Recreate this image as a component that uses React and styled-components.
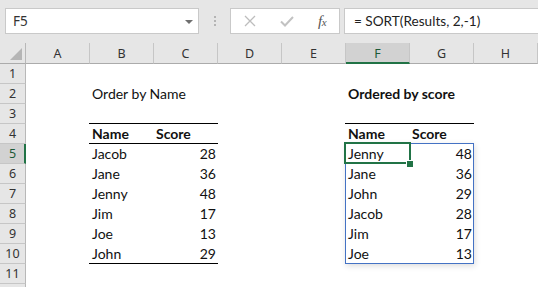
import React from "react";
import styled, { createGlobalStyle, css } from "styled-components";

const GlobalStyle = createGlobalStyle`
  html, body { margin: 0; padding: 0; background: #fff; overflow: hidden; }
  #root { width: 538px; height: 287px; overflow: hidden; }
`;

const CELL_FONT = `Lato, "Open Sans", sans-serif`;
const UI_FONT = `"Noto Sans", "Open Sans", sans-serif`;
const GREEN = "#217346";

const Window = styled.div`
  width: 538px;
  height: 287px;
  overflow: hidden;
  display: flex;
  flex-direction: column;
  background: #fff;
`;

const Toolbar = styled.div`
  flex: none;
  height: 43px;
  box-sizing: border-box;
  padding-top: 8px;
  background: #e6e6e6;
  display: flex;
  align-items: flex-start;
`;

const Box = styled.div`
  height: 26px;
  box-sizing: border-box;
  border: 1px solid #c9c9c9;
  background: #fff;
  display: flex;
  align-items: center;
`;

const NameBox = styled(Box)`
  margin-left: 5px;
  width: 194px;
  justify-content: space-between;
  padding: 0 5px 0 7px;
  font-family: ${UI_FONT};
  font-size: 13.5px;
  color: #333;
`;

const DropArrow = styled.span`
  width: 0;
  height: 0;
  border-left: 4px solid transparent;
  border-right: 4px solid transparent;
  border-top: 4px solid #6f6f6f;
  margin-top: 1px;
`;

const Grip = styled.div`
  width: 31px;
  height: 26px;
  display: flex;
  flex-direction: column;
  align-items: center;
  justify-content: center;
  gap: 2px;
  span {
    width: 2px;
    height: 2px;
    background: #b4b4b4;
  }
`;

const ButtonBox = styled(Box)`
  width: 110px;
`;

const IconSlot = styled.div`
  width: ${(p) => p.$w}px;
  height: 24px;
  display: flex;
  align-items: center;
  justify-content: center;
`;

const Fx = styled.span`
  font-family: "Liberation Serif", "DejaVu Serif", serif;
  font-style: italic;
  font-size: 15px;
  color: #555;
  letter-spacing: -0.5px;
  small {
    font-size: 11px;
  }
`;

const FormulaBox = styled(Box)`
  margin-left: 4px;
  flex: 1;
  margin-right: -10px;
  padding-left: 9px;
  font-family: ${CELL_FONT};
  font-size: 13.6px;
  color: #222;
`;

const Sheet = styled.div`
  position: relative;
  flex: 1;
`;

const COLS = `26px repeat(8, 64px) 1fr`;

const HeaderRow = styled.div`
  display: grid;
  grid-template-columns: ${COLS};
  height: 21px;
  background: #e6e6e6;
`;

const Corner = styled.div`
  position: relative;
  box-sizing: border-box;
  border-right: 1px solid #b8b8b8;
  border-bottom: 1px solid #ababab;
  &::after {
    content: "";
    position: absolute;
    right: 3px;
    bottom: 3px;
    width: 0;
    height: 0;
    border-left: 12px solid transparent;
    border-bottom: 12px solid #b5b5b5;
  }
`;

const ColHead = styled.div`
  box-sizing: border-box;
  border-right: 1px solid #c6c6c6;
  border-bottom: 1px solid #ababab;
  display: flex;
  align-items: center;
  justify-content: center;
  font-family: ${UI_FONT};
  font-size: 12.5px;
  color: #333;
  ${(p) =>
    p.$active &&
    css`
      background: #d2d2d2;
      border-bottom: 2px solid ${GREEN};
      color: #1d5a38;
      padding-top: 1px;
    `}
`;

const Row = styled.div`
  display: grid;
  grid-template-columns: ${COLS};
  height: 20px;
`;

const RowHead = styled.div`
  box-sizing: border-box;
  background: #e6e6e6;
  border-right: 1px solid #b8b8b8;
  border-bottom: 1px solid #c6c6c6;
  display: flex;
  align-items: center;
  justify-content: center;
  font-family: ${UI_FONT};
  font-size: 12.5px;
  color: #333;
  ${(p) =>
    p.$active &&
    css`
      background: #d2d2d2;
      border-right: 2px solid ${GREEN};
      color: #1d5a38;
      padding-left: 1px;
    `}
`;

const Cell = styled.div`
  position: relative;
  box-sizing: border-box;
  height: 20px;
  padding: 0 2px 0 2px;
  font-family: ${CELL_FONT};
  font-size: 14px;
  line-height: 20px;
  color: #111;
  white-space: nowrap;
  overflow: visible;
  text-align: ${(p) => (p.$right ? "right" : "left")};
  font-weight: ${(p) => (p.$bold ? 700 : 400)};
  ${(p) =>
    p.$line &&
    css`
      &::after {
        content: "";
        position: absolute;
        left: -1px;
        right: 0;
        bottom: 0;
        height: 1px;
        background: #000;
      }
    `}
`;

const Range = styled.div`
  position: absolute;
  left: 345px;
  top: 100px;
  width: 129px;
  height: 121px;
  box-sizing: border-box;
  border: 1px solid #4472c4;
  box-shadow: 1px 2px 6px rgba(0, 0, 0, 0.14);
  pointer-events: none;
`;

const Active = styled.div`
  position: absolute;
  left: 344px;
  top: 99px;
  width: 67px;
  height: 22px;
  box-sizing: border-box;
  border: 2px solid ${GREEN};
  pointer-events: none;
`;

const Handle = styled.div`
  position: absolute;
  left: 407px;
  top: 118px;
  width: 6px;
  height: 6px;
  box-sizing: border-box;
  background: ${GREEN};
  outline: 1px solid #fff;
`;

const COL_LETTERS = ["A", "B", "C", "D", "E", "F", "G", "H"];

const ROWS = [
  { n: 1 },
  { n: 2, cells: { B: { t: "Order by Name" }, F: { t: "Ordered by score", bold: true } } },
  { n: 3, lines: ["B", "C", "F", "G"] },
  {
    n: 4,
    lines: ["B", "C"],
    cells: {
      B: { t: "Name", bold: true },
      C: { t: "Score", bold: true },
      F: { t: "Name", bold: true },
      G: { t: "Score", bold: true },
    },
  },
  { n: 5, data: ["Jacob", 28, "Jenny", 48] },
  { n: 6, data: ["Jane", 36, "Jane", 36] },
  { n: 7, data: ["Jenny", 48, "John", 29] },
  { n: 8, data: ["Jim", 17, "Jacob", 28] },
  { n: 9, data: ["Joe", 13, "Jim", 17] },
  { n: 10, data: ["John", 29, "Joe", 13], lines: ["B", "C"] },
  { n: 11 },
  { n: 12, hidden: true },
];

function cellsFor(row) {
  if (row.data) {
    const [a, b, c, d] = row.data;
    return {
      B: { t: a },
      C: { t: String(b), right: true },
      F: { t: c },
      G: { t: String(d), right: true },
    };
  }
  return row.cells || {};
}

const CloseIcon = () => (
  <svg width="12" height="12" viewBox="0 0 12 12">
    <path d="M1 1 L11 11 M11 1 L1 11" stroke="#bdbdbd" strokeWidth="1.3" fill="none" />
  </svg>
);

const CheckIcon = () => (
  <svg width="14" height="11" viewBox="0 0 14 11">
    <path d="M1 5.5 L5 9.5 L13 1" stroke="#c2c2c2" strokeWidth="2" fill="none" />
  </svg>
);

export default function App() {
  return (
    <Window>
      <GlobalStyle />
      <Toolbar>
        <NameBox>
          <span>F5</span>
          <DropArrow />
        </NameBox>
        <Grip>
          <span />
          <span />
          <span />
        </Grip>
        <ButtonBox>
          <IconSlot $w={38}>
            <CloseIcon />
          </IconSlot>
          <IconSlot $w={36}>
            <CheckIcon />
          </IconSlot>
          <IconSlot $w={34}>
            <Fx>
              f<small>x</small>
            </Fx>
          </IconSlot>
        </ButtonBox>
        <FormulaBox>= SORT(Results, 2,-1)</FormulaBox>
      </Toolbar>
      <Sheet>
        <HeaderRow>
          <Corner />
          {COL_LETTERS.map((c) => (
            <ColHead key={c} $active={c === "F"}>
              {c}
            </ColHead>
          ))}
          <ColHead />
        </HeaderRow>
        {ROWS.map((row) => {
          const cells = cellsFor(row);
          const lines = row.lines || [];
          return (
            <Row key={row.n}>
              <RowHead $active={row.n === 5}>{row.hidden ? "" : row.n}</RowHead>
              {COL_LETTERS.map((c) => {
                const cell = cells[c];
                return (
                  <Cell
                    key={c}
                    $right={cell && cell.right}
                    $bold={cell && cell.bold}
                    $line={lines.includes(c)}
                  >
                    {cell ? cell.t : ""}
                  </Cell>
                );
              })}
              <Cell />
            </Row>
          );
        })}
        <Range />
        <Active />
        <Handle />
      </Sheet>
    </Window>
  );
}
